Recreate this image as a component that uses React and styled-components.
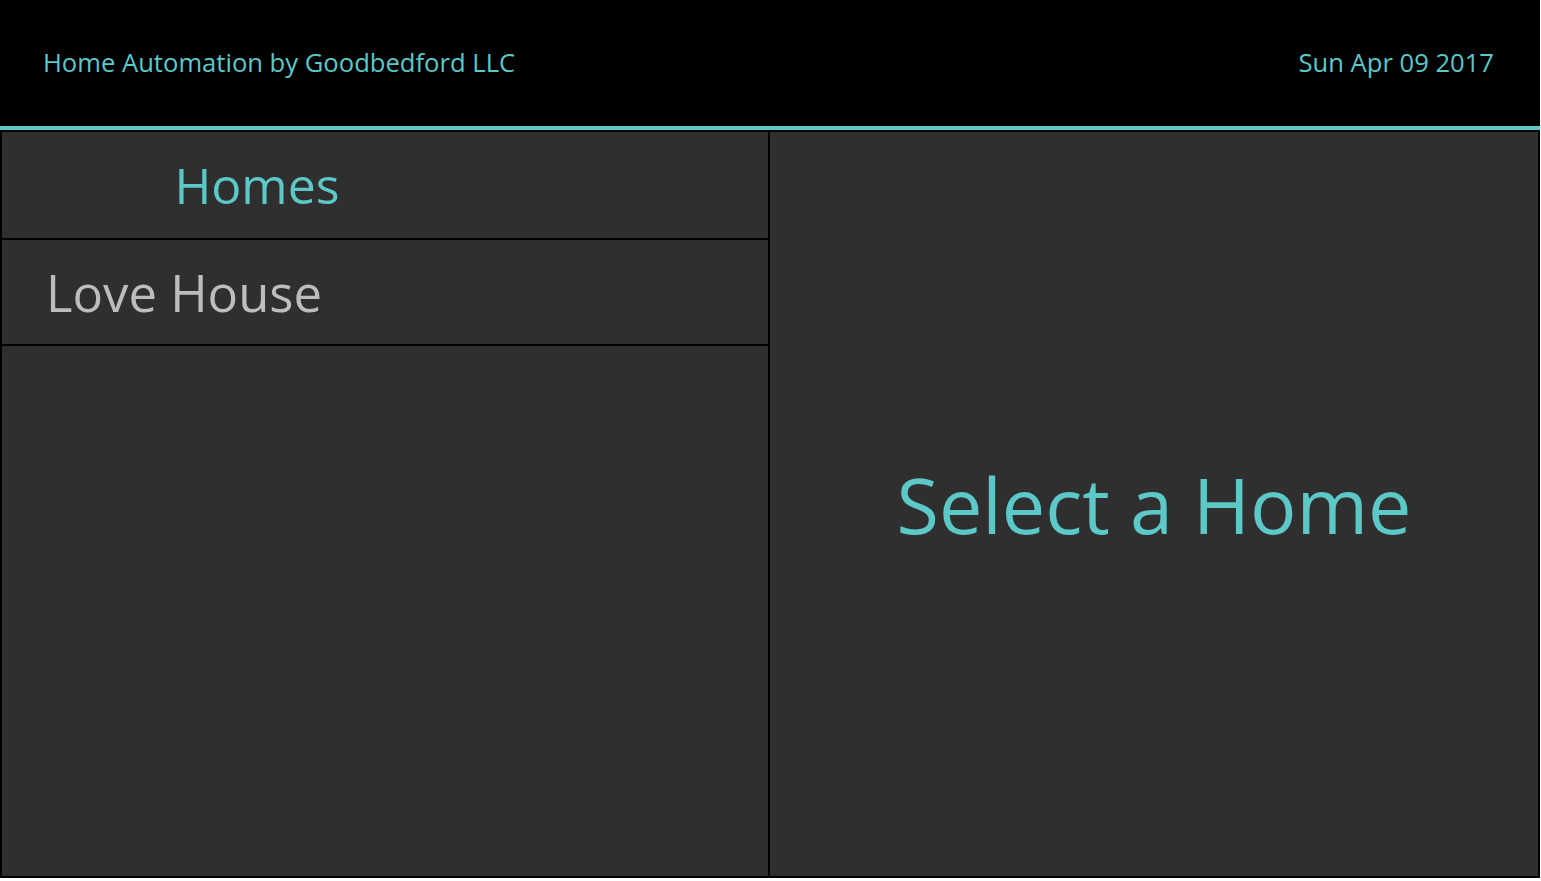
import React from "react";
import styled, { createGlobalStyle } from "styled-components";

const GlobalStyle = createGlobalStyle`
    html, body {
        margin: 0;
        padding: 0;
        background: #ffffff;
    }
    body {
        font-family: "Open Sans", "Liberation Sans", sans-serif;
    }
`;

const Page = styled.div`
    width: 1540px;
    display: flex;
    flex-direction: column;
`;

const Header = styled.header`
    height: 126px;
    background: #000000;
    border-bottom: 4px solid #5cc8c8;
    display: flex;
    align-items: center;
    justify-content: space-between;
    padding: 0 46px 0 43px;
`;

const HeaderText = styled.div`
    color: #5cc8c8;
    font-size: 25.6px;
    line-height: 1;
`;

const Main = styled.main`
    height: 748px;
    box-sizing: border-box;
    background: #000000;
    padding: 2px;
    display: grid;
    grid-template-columns: 766px 768px;
    gap: 2px;
`;

const Panel = styled.section`
    background: #2f2f2f;
    display: flex;
    flex-direction: column;
`;

const ListHeader = styled.div`
    height: 106px;
    border-bottom: 2px solid #000000;
    display: flex;
    align-items: center;
    justify-content: center;
    padding-right: 256px;
    color: #5cc8c8;
    font-size: 50px;
`;

const HomeItem = styled.div`
    height: 104px;
    border-bottom: 2px solid #000000;
    display: flex;
    align-items: center;
    padding-left: 44px;
    color: #bdbdbd;
    font-size: 50.8px;
    cursor: pointer;
`;

const Placeholder = styled(Panel)`
    align-items: center;
    justify-content: center;
    color: #5cc8c8;
    font-size: 77.3px;
`;

const homes = [{ id: 1, name: "Love House" }];

const App = () => {
    return (
        <Page>
            <GlobalStyle />
            <Header>
                <HeaderText>Home Automation by Goodbedford LLC</HeaderText>
                <HeaderText>Sun Apr 09 2017</HeaderText>
            </Header>
            <Main>
                <Panel>
                    <ListHeader>Homes</ListHeader>
                    {homes.map(({ id, name }) => (
                        <HomeItem key={id}>{name}</HomeItem>
                    ))}
                </Panel>
                <Placeholder>Select a Home</Placeholder>
            </Main>
        </Page>
    );
};

export default App;
